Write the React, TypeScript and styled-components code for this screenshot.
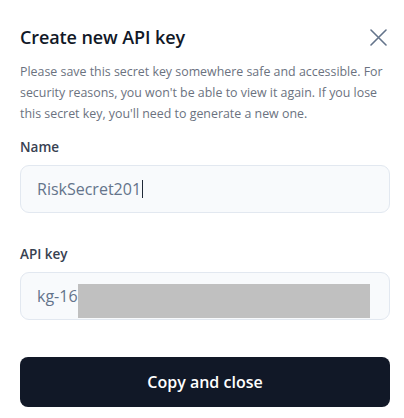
import React from "react";
import styled, { createGlobalStyle } from "styled-components";

const Global = createGlobalStyle`
  html, body { margin: 0; padding: 0; background: #ffffff; }
  body { font-family: "Open Sans", "Noto Sans", sans-serif; }
  * { box-sizing: border-box; }
`;

const Dialog = styled.div`
  width: 404px;
  height: 418px;
  padding: 22px 14px 0 20px;
  display: flex;
  flex-direction: column;
`;

const Header = styled.div`
  display: flex;
  align-items: center;
  justify-content: space-between;
  height: 30px;
`;

const Title = styled.h2`
  margin: 0;
  font-size: 18px;
  font-weight: 600;
  color: #111827;
  letter-spacing: -0.1px;
`;

const CloseButton = styled.button`
  border: none;
  background: transparent;
  padding: 0;
  width: 24px;
  height: 24px;
  display: flex;
  align-items: center;
  justify-content: center;
  color: #64748b;
`;

const Description = styled.p`
  margin: 9px 0 0 0;
  width: 366px;
  font-size: 12.4px;
  line-height: 21px;
  color: #6b7280;
`;

const Field = styled.div<{ $top: number }>`
  margin-top: ${(p) => p.$top}px;
  width: 370px;
  display: flex;
  flex-direction: column;
  gap: 9px;
`;

const Label = styled.label`
  font-size: 13.5px;
  font-weight: 600;
  color: #374151;
  line-height: 18px;
`;

const InputBox = styled.div`
  height: 48px;
  border: 1px solid #e2e8f0;
  border-radius: 9px;
  background: #f8fafc;
  display: flex;
  align-items: center;
  padding: 0 19px 0 16px;
  font-size: 16px;
  color: #64748b;
`;

const Caret = styled.span`
  display: inline-block;
  width: 1px;
  height: 18px;
  background: #1f2937;
  margin-left: 1px;
`;

const Masked = styled.span`
  flex: 1;
  height: 34px;
  margin-top: 10px;
  background: #c0c0c0;
`;

const PrimaryButton = styled.button`
  margin-top: 37px;
  width: 370px;
  height: 50px;
  border: none;
  border-radius: 8px;
  background: #111827;
  color: #ffffff;
  font-family: inherit;
  font-size: 16px;
  font-weight: 600;
`;

export default function App() {
  return (
    <>
      <Global />
      <Dialog>
        <Header>
          <Title>Create new API key</Title>
          <CloseButton aria-label="Close">
            <svg width="17" height="17" viewBox="0 0 17 17" fill="none">
              <path d="M1 1L16 16M16 1L1 16" stroke="currentColor" strokeWidth="1.6" strokeLinecap="round" />
            </svg>
          </CloseButton>
        </Header>
        <Description>
          Please save this secret key somewhere safe and accessible. For security reasons, you won't be able to view it again. If you lose this secret key, you'll need to generate a new one.
        </Description>
        <Field $top={14}>
          <Label>Name</Label>
          <InputBox>
            RiskSecret201
            <Caret />
          </InputBox>
        </Field>
        <Field $top={32}>
          <Label>API key</Label>
          <InputBox>
            kg-16
            <Masked />
          </InputBox>
        </Field>
        <PrimaryButton>Copy and close</PrimaryButton>
      </Dialog>
    </>
  );
}
